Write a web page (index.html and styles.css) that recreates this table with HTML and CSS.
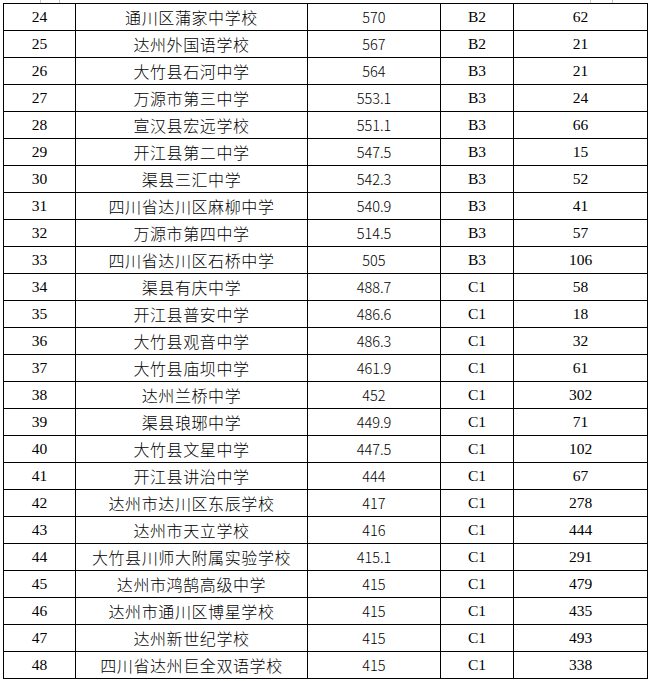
FILE: index.html
```html
<!DOCTYPE html>
<html lang="zh">
<head>
<meta charset="utf-8">
<title>达州学校排名</title>
<link rel="stylesheet" href="styles.css">
</head>
<body>
<div class="page">
  <span class="mark mark-a"></span>
  <span class="mark mark-b"></span>
  <table class="rank">
    <colgroup>
      <col class="c-no">
      <col class="c-name">
      <col class="c-score">
      <col class="c-grade">
      <col class="c-count">
    </colgroup>
    <tbody>
      <tr><td class="no">24</td><td class="name">通川区蒲家中学校</td><td class="score">570</td><td class="grade">B2</td><td class="count">62</td></tr>
      <tr><td class="no">25</td><td class="name">达州外国语学校</td><td class="score">567</td><td class="grade">B2</td><td class="count">21</td></tr>
      <tr><td class="no">26</td><td class="name">大竹县石河中学</td><td class="score">564</td><td class="grade">B3</td><td class="count">21</td></tr>
      <tr><td class="no">27</td><td class="name">万源市第三中学</td><td class="score">553.1</td><td class="grade">B3</td><td class="count">24</td></tr>
      <tr><td class="no">28</td><td class="name">宣汉县宏远学校</td><td class="score">551.1</td><td class="grade">B3</td><td class="count">66</td></tr>
      <tr><td class="no">29</td><td class="name">开江县第二中学</td><td class="score">547.5</td><td class="grade">B3</td><td class="count">15</td></tr>
      <tr><td class="no">30</td><td class="name">渠县三汇中学</td><td class="score">542.3</td><td class="grade">B3</td><td class="count">52</td></tr>
      <tr><td class="no">31</td><td class="name">四川省达川区麻柳中学</td><td class="score">540.9</td><td class="grade">B3</td><td class="count">41</td></tr>
      <tr><td class="no">32</td><td class="name">万源市第四中学</td><td class="score">514.5</td><td class="grade">B3</td><td class="count">57</td></tr>
      <tr><td class="no">33</td><td class="name">四川省达川区石桥中学</td><td class="score">505</td><td class="grade">B3</td><td class="count">106</td></tr>
      <tr><td class="no">34</td><td class="name">渠县有庆中学</td><td class="score">488.7</td><td class="grade">C1</td><td class="count">58</td></tr>
      <tr><td class="no">35</td><td class="name">开江县普安中学</td><td class="score">486.6</td><td class="grade">C1</td><td class="count">18</td></tr>
      <tr><td class="no">36</td><td class="name">大竹县观音中学</td><td class="score">486.3</td><td class="grade">C1</td><td class="count">32</td></tr>
      <tr><td class="no">37</td><td class="name">大竹县庙坝中学</td><td class="score">461.9</td><td class="grade">C1</td><td class="count">61</td></tr>
      <tr><td class="no">38</td><td class="name">达州兰桥中学</td><td class="score">452</td><td class="grade">C1</td><td class="count">302</td></tr>
      <tr><td class="no">39</td><td class="name">渠县琅琊中学</td><td class="score">449.9</td><td class="grade">C1</td><td class="count">71</td></tr>
      <tr><td class="no">40</td><td class="name">大竹县文星中学</td><td class="score">447.5</td><td class="grade">C1</td><td class="count">102</td></tr>
      <tr><td class="no">41</td><td class="name">开江县讲治中学</td><td class="score">444</td><td class="grade">C1</td><td class="count">67</td></tr>
      <tr><td class="no">42</td><td class="name">达州市达川区东辰学校</td><td class="score">417</td><td class="grade">C1</td><td class="count">278</td></tr>
      <tr><td class="no">43</td><td class="name">达州市天立学校</td><td class="score">416</td><td class="grade">C1</td><td class="count">444</td></tr>
      <tr><td class="no">44</td><td class="name">大竹县川师大附属实验学校</td><td class="score">415.1</td><td class="grade">C1</td><td class="count">291</td></tr>
      <tr><td class="no">45</td><td class="name">达州市鸿鹄高级中学</td><td class="score">415</td><td class="grade">C1</td><td class="count">479</td></tr>
      <tr><td class="no">46</td><td class="name">达州市通川区博星学校</td><td class="score">415</td><td class="grade">C1</td><td class="count">435</td></tr>
      <tr><td class="no">47</td><td class="name">达州新世纪学校</td><td class="score">415</td><td class="grade">C1</td><td class="count">493</td></tr>
      <tr><td class="no">48</td><td class="name">四川省达州巨全双语学校</td><td class="score">415</td><td class="grade">C1</td><td class="count">338</td></tr>
    </tbody>
  </table>
</div>
</body>
</html>
```
FILE: styles.css
```css
html, body {
  margin: 0;
  padding: 0;
  background: #ffffff;
}

.page {
  position: relative;
  padding: 3px 0 0 3px;
}

.mark {
  position: absolute;
  top: 0;
  height: 3px;
  border-left: 1px solid #c8c8c8;
  border-right: 1px solid #c8c8c8;
}

.mark-a {
  left: 40px;
  width: 18px;
}

.mark-b {
  left: 590px;
  width: 21px;
}

.rank {
  border-collapse: collapse;
  table-layout: fixed;
  width: 645px;
  color: #000000;
}

.c-no { width: 72px; }
.c-name { width: 232px; }
.c-score { width: 133px; }
.c-grade { width: 73px; }
.c-count { width: 134px; }

.rank td {
  border: 1px solid #000000;
  height: 26px;
  padding: 0;
  text-align: center;
  white-space: nowrap;
  box-sizing: border-box;
  line-height: 26px;
  vertical-align: middle;
}

.rank tr {
  height: 27px;
}

.no,
.grade,
.count {
  font-family: "Liberation Serif", "Times New Roman", serif;
  font-size: 15.5px;
  padding-top: 2px;
}

.name {
  font-family: "Noto Sans CJK SC", "Microsoft YaHei", sans-serif;
  font-weight: 300;
  font-size: 16px;
  letter-spacing: 0.6px;
}

.score {
  font-family: "Noto Sans CJK SC", "Liberation Sans", sans-serif;
  font-weight: 300;
  font-size: 14.5px;
  padding-top: 1px;
}
```
